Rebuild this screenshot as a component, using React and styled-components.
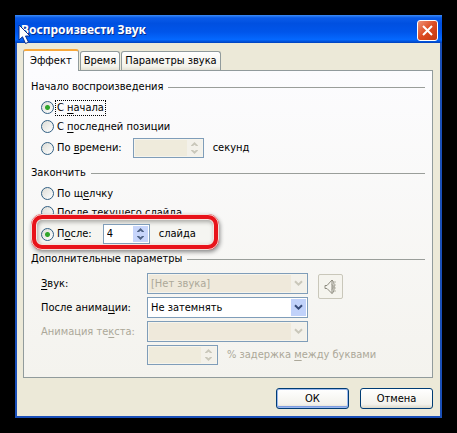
import React from 'react'
import styled, { createGlobalStyle, css } from 'styled-components'

const GlobalStyle = createGlobalStyle`
  body {
    margin: 0;
    background: #000;
  }

  *,
  *::before,
  *::after {
    box-sizing: border-box;
  }

  body, button, input, select {
    font-family: 'DejaVu Sans Condensed', 'DejaVu Sans', sans-serif;
    font-size: 11px;
    line-height: 16px;
    color: #000;
  }
`

const Desktop = styled.main`
  padding: 15px;
`

const Dialog = styled.section`
  position: relative;
  border: 2px solid #1a4fb8;
  border-top: none;
  background: #ece9d8;
`

const TitleBar = styled.header`
  display: flex;
  justify-content: space-between;
  align-items: center;
  height: 28px;
  margin: 0 -2px;
  padding: 2px 4px 0 6px;
  background: linear-gradient(#3c8cf5 0, #0a5be8 10%, #0050e0 30%, #0055ea 60%, #0468ff 88%, #0040bb 100%);
`

const Title = styled.h1`
  margin: 0;
  font-family: 'Noto Sans', sans-serif;
  font-size: 12px;
  line-height: 20px;
  color: #fff;
  text-shadow: 1px 1px 0 #0a2f8c;
`

const CloseButton = styled.button`
  display: flex;
  justify-content: center;
  align-items: center;
  width: 21px;
  height: 21px;
  padding: 0;
  border: 1px solid #fff;
  border-radius: 3px;
  background: linear-gradient(135deg, #ee9379, #dd4a20 50%, #c23a12);
`

const Pointer = styled.svg`
  position: absolute;
  left: 1px;
  top: 9px;
  width: 14px;
  height: 21px;
`

const Content = styled.div`
  padding: 6px 7px 7px 6px;
`

const Tabs = styled.div`
  display: flex;
  align-items: flex-end;
  gap: 1px;
`

const Tab = styled.button`
  height: 19px;
  padding: 0 3px;
  border: 1px solid #919b9c;
  border-bottom: none;
  border-radius: 3px 3px 0 0;
  background: linear-gradient(#fff, #f3f2ea 80%, #e4e1d4);

  ${({ $active }) =>
    $active &&
    css`
      position: relative;
      height: 22px;
      margin-bottom: -1px;
      padding: 0 6px 1px;
      border-top: 2px solid #f9a83a;
      background: #fcfcfe;
    `}
`

const Panel = styled.div`
  padding: 8px 7px 12px 7px;
  border: 1px solid #919b9c;
  background: linear-gradient(#fcfcfe, #f4f3ee);
`

const Group = styled.fieldset`
  min-width: 0;
  margin: 0 0 7px;
  padding: 0;
  border: none;

  &:last-child {
    margin: 0;
  }
`

const GroupTitle = styled.legend`
  display: flex;
  align-items: center;
  gap: 5px;
  width: 100%;
  margin-bottom: 3px;
  padding: 0;
  white-space: nowrap;

  &::after {
    content: '';
    flex: 1;
    height: 1px;
    background: #9a9e9a;
  }
`

const Option = styled.div`
  display: flex;
  align-items: center;
  height: 19px;
  padding-left: 10px;
`

const SpinOption = styled(Option)`
  height: 20px;
  margin-top: 2px;
`

const MarkedOption = styled(SpinOption)`
  position: relative;

  &::before {
    content: '';
    position: absolute;
    left: 0;
    top: -10px;
    width: 188px;
    height: 36px;
    border: 5px solid #e8131a;
    border-radius: 11px;
    outline: 1px solid #f3dcd8;
    outline-offset: -1px;
    box-shadow: inset 0 0 0 1px #f8e4e0, inset 1px 2px 4px 1px #a8a8a4, 1px 2px 4px #888;
    background: #f5f5f1;
    background-clip: padding-box;
  }

  > * {
    position: relative;
  }
`

const Radio = styled.input`
  appearance: none;
  flex: none;
  width: 13px;
  height: 13px;
  margin: 0 2px 0 0;
  border: 1px solid #315f83;
  border-radius: 50%;
  background: linear-gradient(135deg, #dcdcd6, #fff);

  &:checked {
    background: radial-gradient(circle, #2fa52b 0 2px, #fff0 3px), linear-gradient(135deg, #dcdcd6, #fff);
  }
`

const OptionLabel = styled.label`
  padding: 0 1px;
  line-height: 14px;
  white-space: nowrap;
  outline: ${({ $focused }) => ($focused ? '1px dotted #000' : 'none')};
`

const Mnemonic = styled.span`
  text-decoration: underline;
  text-underline-offset: 2px;
`

const SpinBox = styled.span`
  display: flex;
  flex: none;
  width: ${({ $wide }) => ($wide ? '71px' : '47px')};
  height: 20px;
  margin-left: ${({ $spaced }) => ($spaced ? '10px' : '0')};
  padding: 1px;
  border: 1px solid #7f9db9;
  background: ${({ $disabled }) => ($disabled ? '#f6f4ec' : '#fff')};
`

const SpinInput = styled.input`
  flex: 1;
  min-width: 0;
  padding: 0 2px;
  border: none;
  background: #fff;

  &:disabled {
    background: #efebdc;
  }
`

const SpinArrows = styled.span`
  display: flex;
  flex-direction: column;
  width: 15px;
`

const Arrow = styled.button`
  display: flex;
  flex: 1;
  justify-content: center;
  align-items: center;
  padding: 0;
  border: none;
  background: #c7d5fb;
  color: #4d6185;

  &:disabled {
    background: #f3f1ea;
    color: #c9c7ba;
  }
`

const Unit = styled.span`
  margin-left: 9px;
  color: ${({ $disabled }) => ($disabled ? '#aca899' : '#000')};
`

const Settings = styled.div`
  display: grid;
  grid-template-columns: 106px 161px 1fr;
  align-items: center;
  row-gap: 3px;
  padding: 3px 0 0 10px;
`

const SettingLabel = styled.label`
  white-space: nowrap;
  color: ${({ $disabled }) => ($disabled ? '#aca899' : '#000')};
`

const SelectBox = styled.span`
  display: grid;
  height: 21px;
  padding: 1px;
  border: 1px solid #7f9db9;
  background: ${({ $disabled }) => ($disabled ? '#f6f4ec' : '#fff')};

  > * {
    grid-area: 1 / 1;
  }
`

const Select = styled.select`
  appearance: none;
  width: 100%;
  padding: 0 17px 0 2px;
  border: none;
  background: #fff;

  &:disabled {
    background: #efe9db;
    color: #aca899;
    opacity: 1;
  }
`

const SelectArrow = styled.span`
  display: flex;
  justify-self: end;
  justify-content: center;
  align-items: center;
  width: 15px;
  pointer-events: none;
  background: ${({ $disabled }) => ($disabled ? '#f3f1ea' : '#c1d2fa')};
  color: ${({ $disabled }) => ($disabled ? '#c9c7ba' : '#354a78')};
`

const SoundCell = styled.div`
  height: 21px;
  padding: 1px 0 0 10px;
`

const SoundButton = styled.button`
  display: flex;
  justify-content: center;
  align-items: center;
  width: 25px;
  height: 25px;
  padding: 0;
  border: 1px solid #c9c7ba;
  border-radius: 2px;
  background: #f5f4ee;
`

const Delay = styled.div`
  display: flex;
  align-items: center;
  grid-column: 2 / -1;
  white-space: nowrap;
`

const Footer = styled.footer`
  display: flex;
  justify-content: flex-end;
  gap: 11px;
  padding-top: 10px;
`

const Button = styled.button`
  width: 73px;
  height: 21px;
  padding: 0;
  border: 1px solid #003c74;
  border-radius: 3px;
  background: linear-gradient(#fff, #f3f2ec 80%, #dcd8ca);
  box-shadow: ${({ $primary }) => ($primary ? 'inset 0 0 0 1px #9ab7ee, inset 0 -2px 0 #7f9de0' : 'none')};
`

const Chevron = () => (
  <svg width="9" height="7" viewBox="0 0 9 7" fill="none" stroke="currentColor" strokeWidth="2">
    <path d="M1 1.2 4.5 4.7 8 1.2" />
  </svg>
)

const Spin = ({ label, value = '', wide, disabled, spaced }) => (
  <SpinBox $wide={wide} $disabled={disabled} $spaced={spaced}>
    <SpinInput aria-label={label} defaultValue={value} disabled={disabled} />
    <SpinArrows>
      <Arrow type="button" aria-label="+" disabled={disabled}>
        <svg width="7" height="4" fill="currentColor">
          <path d="M3.5 0 7 3.5V4H5L3.5 2.7 2 4H0v-.5z" />
        </svg>
      </Arrow>
      <Arrow type="button" aria-label="-" disabled={disabled}>
        <svg width="7" height="4" fill="currentColor">
          <path d="M3.5 4 0 .5V0h2l1.5 1.3L5 0h2v.5z" />
        </svg>
      </Arrow>
    </SpinArrows>
  </SpinBox>
)

const DropDown = ({ id, value, disabled }) => (
  <SelectBox $disabled={disabled}>
    <Select id={id} disabled={disabled}>
      <option>{value}</option>
    </Select>
    <SelectArrow $disabled={disabled}>
      <Chevron />
    </SelectArrow>
  </SelectBox>
)

const App = () => (
  <Desktop>
    <GlobalStyle />
    <Dialog>
      <TitleBar>
        <Title>Воспроизвести Звук</Title>
        <CloseButton type="button" aria-label="×">
          <svg width="11" height="11" viewBox="0 0 11 11" stroke="#fff" strokeWidth="2">
            <path d="m1 1 9 9M10 1l-9 9" />
          </svg>
        </CloseButton>
      </TitleBar>
      <Content>
        <Tabs role="tablist">
          <Tab type="button" role="tab" aria-selected="true" $active>
            Эффект
          </Tab>
          <Tab type="button" role="tab">
            Время
          </Tab>
          <Tab type="button" role="tab">
            Параметры звука
          </Tab>
        </Tabs>
        <Panel>
          <Group>
            <GroupTitle>Начало воспроизведения</GroupTitle>
            <Option>
              <Radio type="radio" name="start" id="start-begin" defaultChecked />
              <OptionLabel htmlFor="start-begin" $focused>
                С <Mnemonic>н</Mnemonic>ачала
              </OptionLabel>
            </Option>
            <Option>
              <Radio type="radio" name="start" id="start-last" />
              <OptionLabel htmlFor="start-last">
                С <Mnemonic>п</Mnemonic>оследней позиции
              </OptionLabel>
            </Option>
            <SpinOption>
              <Radio type="radio" name="start" id="start-time" />
              <OptionLabel htmlFor="start-time">
                По <Mnemonic>в</Mnemonic>ремени:
              </OptionLabel>
              <Spin label="По времени" wide disabled spaced />
              <Unit>секунд</Unit>
            </SpinOption>
          </Group>
          <Group>
            <GroupTitle>Закончить</GroupTitle>
            <Option>
              <Radio type="radio" name="stop" id="stop-click" />
              <OptionLabel htmlFor="stop-click">
                По щ<Mnemonic>е</Mnemonic>лчку
              </OptionLabel>
            </Option>
            <Option>
              <Radio type="radio" name="stop" id="stop-current" />
              <OptionLabel htmlFor="stop-current">После текущего слайда</OptionLabel>
            </Option>
            <MarkedOption>
              <Radio type="radio" name="stop" id="stop-after" defaultChecked />
              <OptionLabel htmlFor="stop-after">
                П<Mnemonic>о</Mnemonic>сле:
              </OptionLabel>
              <Spin label="После" value="4" spaced />
              <Unit>слайда</Unit>
            </MarkedOption>
          </Group>
          <Group>
            <GroupTitle>Дополнительные параметры</GroupTitle>
            <Settings>
              <SettingLabel htmlFor="sound">
                <Mnemonic>З</Mnemonic>вук:
              </SettingLabel>
              <DropDown id="sound" value="[Нет звука]" disabled />
              <SoundCell>
                <SoundButton type="button" aria-label="Звук" disabled>
                  <svg width="14" height="18" viewBox="0 0 14 18" fill="none" stroke="#8e8c80">
                    <path d="M1 7.5v3h2l5 5V2L3 7.5z" fill="#f5f4ee" />
                    <path d="M8 2c3 2 3 11.500 0 13.500M8 6.500c1.500 1 1.500 4 0 5" />
                    <path d="M11 3v12" stroke="#b5b3a6" strokeDasharray="2 1" />
                  </svg>
                </SoundButton>
              </SoundCell>
              <SettingLabel htmlFor="after">
                После анима<Mnemonic>ц</Mnemonic>ии:
              </SettingLabel>
              <DropDown id="after" value="Не затемнять" />
              <span />
              <SettingLabel htmlFor="text" $disabled>
                Анимация те<Mnemonic>к</Mnemonic>ста:
              </SettingLabel>
              <DropDown id="text" value="" disabled />
              <span />
              <span />
              <Delay>
                <Spin label="% задержка между буквами" wide disabled />
                <Unit $disabled>
                  % задержка <Mnemonic>м</Mnemonic>ежду буквами
                </Unit>
              </Delay>
            </Settings>
          </Group>
        </Panel>
        <Footer>
          <Button type="button" $primary>
            ОК
          </Button>
          <Button type="button">Отмена</Button>
        </Footer>
      </Content>
      <Pointer viewBox="0 0 14 21" fill="#fff" stroke="#0a2f8c">
        <path d="M1 1v15l3.500-3.200L7.500 19.500l3-1.300-3-6.200H12z" />
      </Pointer>
    </Dialog>
  </Desktop>
)

export default App
